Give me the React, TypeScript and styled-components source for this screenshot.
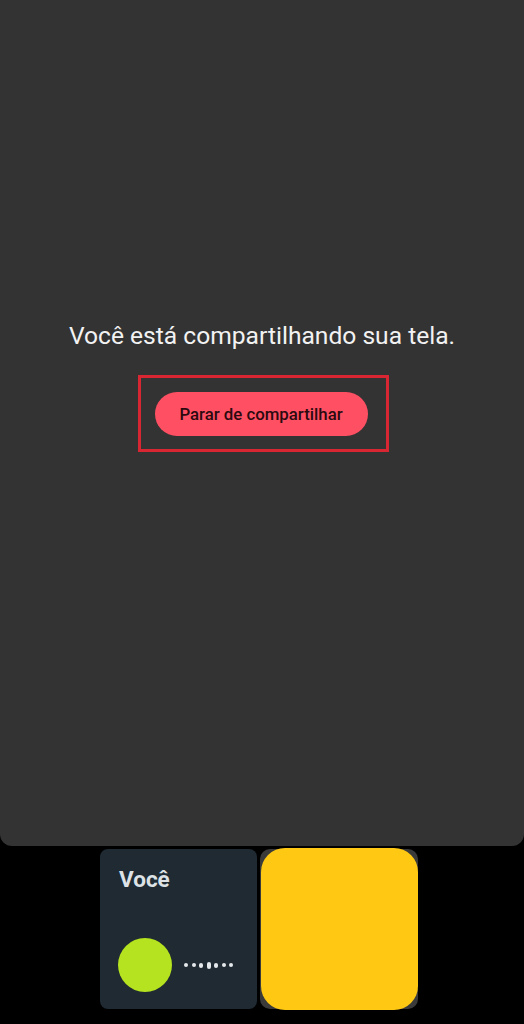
import React from "react"
import styled, { createGlobalStyle } from "styled-components"

const GlobalStyle = createGlobalStyle`
  html, body {
    margin: 0;
    padding: 0;
    background: #000000;
    font-family: Roboto, "Liberation Sans", sans-serif;
  }
`

const Screen = styled.div`
  width: 524px;
  height: 1024px;
  background: #000000;
  display: flex;
  flex-direction: column;
  overflow: hidden;
`

const SharePanel = styled.div`
  height: 846px;
  flex-shrink: 0;
  background: #333333;
  border-radius: 0 0 12px 12px;
  display: flex;
  flex-direction: column;
  align-items: center;
  padding-top: 320px;
  box-sizing: border-box;
`

const Message = styled.p`
  margin: 0;
  color: #f2f2f2;
  font-size: 24.6px;
  line-height: 32px;
  font-weight: 400;
`

const Highlight = styled.div`
  margin-top: 23px;
  margin-left: 2px;
  width: 251px;
  height: 77px;
  box-sizing: border-box;
  border: 3px solid #d92633;
  display: flex;
  align-items: center;
  padding-left: 14px;
`

const StopButton = styled.button`
  width: 213px;
  height: 44px;
  border: none;
  border-radius: 22px;
  background: #ff4f63;
  color: #2b0a0f;
  font-family: Roboto, "Liberation Sans", sans-serif;
  font-size: 16.8px;
  font-weight: 500;
  cursor: pointer;
`

const TileRow = styled.div`
  display: flex;
  gap: 3px;
  padding: 3px 0 0 100px;
`

const SelfTile = styled.div`
  width: 157px;
  height: 160px;
  box-sizing: border-box;
  background: #1f2a33;
  border-radius: 8px;
  padding: 17px 18px 0 19px;
  display: flex;
  flex-direction: column;
`

const TileName = styled.span`
  color: #dde2e6;
  font-size: 22.5px;
  font-weight: 700;
  line-height: 26px;
`

const SelfInfo = styled.div`
  margin-top: 46px;
  display: flex;
  align-items: center;
  gap: 12px;
`

const Avatar = styled.div`
  width: 54px;
  height: 54px;
  margin-left: -1px;
  border-radius: 50%;
  background: #b5e31f;
`

const Waveform = styled.div`
  display: flex;
  align-items: center;
  gap: 3.5px;
`

const Dot = styled.span<{ $h: number }>`
  width: 4px;
  height: ${p => p.$h}px;
  border-radius: 2px;
  background: #e6e9ec;
`

const GuestTile = styled.div`
  width: 158px;
  height: 160px;
  border-radius: 10px;
  background: #3a3a3a;
  position: relative;
`

const Yellow = styled.div`
  position: absolute;
  inset: -1px 0 -1px 1px;
  border-radius: 24px;
  background: #ffc812;
`

const levels = [4, 4, 5, 7, 5, 4, 4]

export default function App() {
  return (
    <Screen>
      <GlobalStyle />
      <SharePanel>
        <Message>Você está compartilhando sua tela.</Message>
        <Highlight>
          <StopButton>Parar de compartilhar</StopButton>
        </Highlight>
      </SharePanel>
      <TileRow>
        <SelfTile>
          <TileName>Você</TileName>
          <SelfInfo>
            <Avatar />
            <Waveform>
              {levels.map((h, i) => (
                <Dot key={i} $h={h} />
              ))}
            </Waveform>
          </SelfInfo>
        </SelfTile>
        <GuestTile>
          <Yellow />
        </GuestTile>
      </TileRow>
    </Screen>
  )
}
